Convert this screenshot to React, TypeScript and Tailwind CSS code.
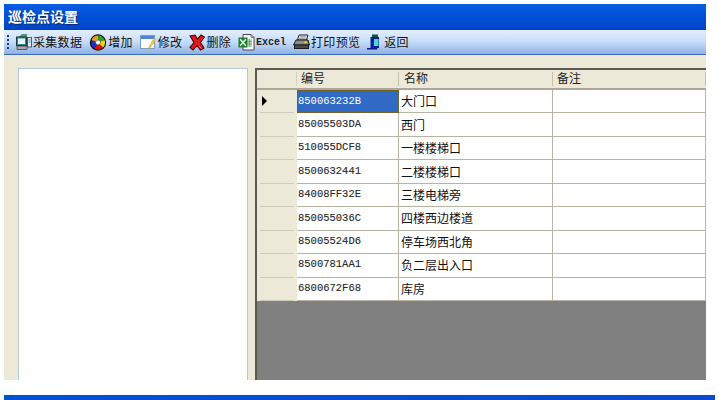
import React from "react";

const cjk = '"Noto Sans CJK SC", "Liberation Sans", sans-serif';
const mono = '"Liberation Mono", monospace';

const rows = [
  ["850063232B", "大门口"],
  ["85005503DA", "西门"],
  ["510055DCF8", "一楼楼梯口"],
  ["8500632441", "二楼楼梯口"],
  ["84008FF32E", "三楼电梯旁"],
  ["850055036C", "四楼西边楼道"],
  ["85005524D6", "停车场西北角"],
  ["8500781AA1", "负二层出入口"],
  ["6800672F68", "库房"],
];

const CollectIcon = () => (
  <svg width="17" height="17" viewBox="0 0 17 17">
    <path d="M4 3L7 0.5H12L11 3Z" fill="#4fa04f" stroke="#2a6a3a" strokeWidth="0.5" />
    <rect x="1.5" y="3" width="10" height="8.5" fill="#2f8a90" stroke="#173f48" />
    <rect x="3" y="4.5" width="7" height="5.5" fill="#e4f4f6" />
    <rect x="2" y="12" width="10" height="3.5" fill="#a8a8a8" stroke="#333" strokeWidth="0.7" />
    <rect x="12.5" y="3.5" width="4" height="9.5" fill="#e6ecf6" stroke="#244" strokeWidth="0.8" />
    <path d="M13.5 6H15.5M13.5 8H15.5" stroke="#1a8a8a" strokeWidth="0.8" />
  </svg>
);

const AddIcon = () => (
  <svg width="18" height="17" viewBox="0 0 17 17">
    <circle cx="8.5" cy="8.5" r="8.2" fill="#111" />
    <path d="M8.5 8.5L8.5 1.5A7 7 0 0 1 15 6Z" fill="#2aa02a" />
    <path d="M8.5 8.5L15 6A7 7 0 0 1 13.5 13.5Z" fill="#f0d800" />
    <path d="M8.5 8.5L13.5 13.5A7 7 0 0 1 5 14.5Z" fill="#e01010" />
    <path d="M8.5 8.5L5 14.5A7 7 0 0 1 2 6Z" fill="#1a30d0" />
    <path d="M8.5 8.5L2 6A7 7 0 0 1 8.5 1.5Z" fill="#e8a010" />
    <circle cx="8.5" cy="8.5" r="2.4" fill="#fff" stroke="#333" strokeWidth="0.5" />
  </svg>
);

const EditIcon = () => (
  <svg width="17" height="16" viewBox="0 0 17 16">
    <rect x="0.5" y="1.5" width="14" height="13" fill="#fff" stroke="#7c9cc8" />
    <rect x="1" y="2" width="13" height="3" fill="#4f86d0" />
    <path d="M14 4L16 5.5L10 14L8 15Z" fill="#f2c84a" stroke="#c09a30" strokeWidth="0.5" />
  </svg>
);

const DeleteIcon = () => (
  <svg width="16" height="17" viewBox="0 0 16 17">
    <path
      d="M1 2L6 1L8.5 5L12 1L15.5 3L11.5 8.5L15 14L11.5 16L8 11.5L4 16L1 13.5L5 8.5Z"
      fill="#e8141c"
      stroke="#3a0606"
      strokeWidth="1.1"
    />
    <path d="M10 12L12.5 14.5" stroke="#f08a8a" strokeWidth="1" />
  </svg>
);

const ExcelIcon = () => (
  <svg width="17" height="17" viewBox="0 0 17 17">
    <path d="M5 0.5H13L16 3.5V16H5Z" fill="#fff" stroke="#444" />
    <path d="M13 0.5V3.5H16" fill="none" stroke="#444" strokeWidth="0.7" />
    <rect x="9.5" y="5" width="4.5" height="8" fill="#b8d8b8" />
    <path d="M9.5 7.5H14M9.5 10H14M11.5 5V13" stroke="#4a8a4a" strokeWidth="0.6" />
    <rect x="0.5" y="3.5" width="9" height="10" fill="#1d7a30" />
    <path d="M2.2 5.2L7.8 11.8M7.8 5.2L2.2 11.8" stroke="#e6f6e6" strokeWidth="1.5" />
  </svg>
);

const PrintIcon = () => (
  <svg width="17" height="16" viewBox="0 0 17 16">
    <path d="M6 1H15L13.5 6H4.5Z" fill="#e8e8e8" stroke="#222" />
    <path d="M7 2.8H13M6.5 4.3H12.5" stroke="#777" strokeWidth="0.7" />
    <path d="M3 6H15L16.5 11H0.5Z" fill="#8c8c8c" stroke="#1c1c1c" />
    <rect x="1.5" y="11" width="14" height="3.5" fill="#4a4a4a" stroke="#1c1c1c" />
    <rect x="11.5" y="7.5" width="2" height="1.5" fill="#f4f400" />
  </svg>
);

const BackIcon = () => (
  <svg width="16" height="17" viewBox="0 0 16 17">
    <rect x="5" y="0.5" width="6" height="2.5" fill="#0a5a3a" />
    <rect x="3.5" y="3" width="8.5" height="11" fill="#0c1ca0" />
    <rect x="7" y="5" width="4.5" height="7" fill="#48d8d8" />
    <rect x="0" y="14" width="10.5" height="1.5" fill="#0c1480" />
    <rect x="10.5" y="14" width="4.5" height="2" fill="#a8c0d8" />
  </svg>
);

const ToolItem = ({ icon, label, isMono }: { icon: React.ReactNode; label: string; isMono?: boolean }) => (
  <div className="flex items-center gap-[1px]">
    {icon}
    <span
      className={isMono ? "text-[10px] font-bold text-[#222]" : "text-[12px] tracking-[0.3px] text-[#111]"}
      style={{ fontFamily: isMono ? mono : cjk }}
    >
      {label}
    </span>
  </div>
);

export default function App() {
  return (
    <div className="h-[400px] w-[719px] overflow-hidden bg-white pt-1" style={{ fontFamily: cjk }}>
      <div className="ml-1 w-[702px]">
        <div className="flex h-[25px] items-center bg-gradient-to-b from-[#0a5ce0] via-[#0050d8] to-[#0246c8] pb-[2px] pl-1 text-[14px] font-bold leading-none text-white [text-shadow:1px_1px_1px_#0a2a70]">
          巡检点设置
        </div>
        <div className="flex h-[26px] items-center gap-[7px] border-t border-b border-t-[#0a3fa8] border-b-[#3a6ab0] bg-gradient-to-b from-[#e4efff] via-[#c6dcf8] to-[#8fb2e4] pl-[3px]">
          <div className="mr-[-2px] flex h-[16px] w-[3px] flex-col justify-between py-[1px]">
            <span className="h-[2px] w-[2px] bg-[#1c3a78]" />
            <span className="h-[2px] w-[2px] bg-[#1c3a78]" />
            <span className="h-[2px] w-[2px] bg-[#1c3a78]" />
            <span className="h-[2px] w-[2px] bg-[#1c3a78]" />
          </div>
          <ToolItem icon={<CollectIcon />} label="采集数据" />
          <ToolItem icon={<AddIcon />} label="增加" />
          <ToolItem icon={<EditIcon />} label="修改" />
          <ToolItem icon={<DeleteIcon />} label="删除" />
          <ToolItem icon={<ExcelIcon />} label="Excel" isMono />
          <ToolItem icon={<PrintIcon />} label="打印预览" />
          <ToolItem icon={<BackIcon />} label="返回" />
        </div>
        <div className="flex h-[325px] gap-[7px] overflow-hidden bg-[#ece9d8] pl-[14px] pt-[13px]">
          <div className="h-[320px] w-[230px] shrink-0 border border-[#b5c8dc] bg-white" />
          <div className="flex min-w-0 flex-1 flex-col border-l-2 border-t-2 border-l-[#5c5a50] border-t-[#5c5a50] bg-[#808080]">
            <div className="flex h-[20px] shrink-0 border-b-2 border-b-[#aca899] bg-[#ece9d8] text-[12px] text-[#222]">
              <div className="my-[2px] w-[40px] border-r border-r-[#d6d2c2]" />
              <div className="my-[2px] w-[102px] border-r border-r-[#c4c0ae] pl-[4px] leading-[12px]">编号</div>
              <div className="my-[2px] w-[154px] border-r border-r-[#c4c0ae] pl-[5px] leading-[12px]">名称</div>
              <div className="my-[2px] flex-1 border-r border-r-[#c4c0ae] pl-[4px] leading-[12px]">备注</div>
            </div>
            {rows.map(([code, name], i) => (
              <div key={code} className="flex h-[23.44px] shrink-0">
                <div className="w-[40px] bg-[#ece9d8] px-[3px]">
                  <div className="flex h-full items-center border-b border-b-[#cfcbba] pl-[2px]">
                    {i === 0 && <span className="h-0 w-0 border-y-[5px] border-l-[5px] border-y-transparent border-l-black" />}
                  </div>
                </div>
                <div
                  className={
                    i === 0
                      ? "flex w-[102px] items-center border border-dotted border-[#6f5f28] bg-[#316ac5] text-[10.5px] text-white"
                      : "flex w-[102px] items-center border-b border-r border-[#b8b4a4] bg-white pl-[1px] text-[10.5px] text-[#222] [-webkit-text-stroke:0.1px_#333]"
                  }
                  style={{ fontFamily: mono }}
                >
                  {code}
                </div>
                <div className="flex w-[154px] items-center border-b border-r border-[#b8b4a4] bg-white pl-[2px] text-[12px] text-[#111]">
                  {name}
                </div>
                <div className="flex-1 border-b border-r border-[#b8b4a4] bg-white" />
              </div>
            ))}
          </div>
        </div>
      </div>
      <div className="ml-1 mt-[15px] h-[5px] w-[711px] bg-gradient-to-r from-[#0050d8] to-[#0a4ad0]" />
    </div>
  );
}
